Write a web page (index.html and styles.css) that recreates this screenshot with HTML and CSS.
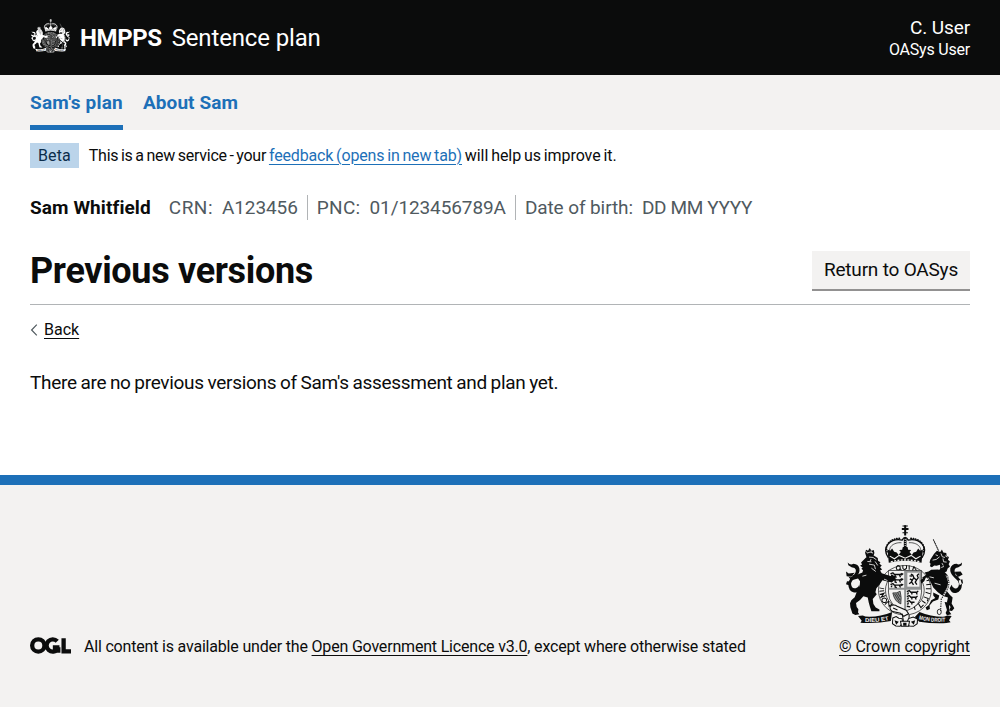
FILE: index.html
```html
<!DOCTYPE html>
<html lang="en">
<head>
<meta charset="utf-8">
<title>Previous versions - Sentence plan</title>
<link rel="stylesheet" href="styles.css">
</head>
<body>
<svg class="sprite" aria-hidden="true">
  <symbol id="crest" viewBox="50 28 350 308">
    <!-- crown -->
    <g fill="none" stroke="currentColor">
      <path d="M227 29v30M217 40h20" stroke-width="6"/>
      <path d="M219 31h16M219 51h16" stroke-width="3"/>
      <path d="M177 126C153 92 186 67 218 73Q227 57 236 73C268 67 300 92 277 126" stroke-width="4"/>
      <path d="M185 119C170 94 194 79 216 81M269 119C284 94 260 79 238 81" stroke-width="2"/>
      <path d="M227 67v36" stroke-width="8"/>
      <path d="M173 108C164 84 188 67 213 68M281 108C290 84 266 67 241 68" stroke-width="5" stroke-linecap="round" stroke-dasharray="1 6"/>
      <path d="M227 70v34" stroke="var(--ground)" stroke-width="3" stroke-dasharray="3 3"/>
    </g>
    <path fill="currentColor" d="M174 101l8 4 6-7 6 10 8 2 5 8 7-9-5-6 9-1 2-8h14l2 8 9 1-5 6 7 9 5-8 8-2 6-10 6 7 8-4-4 40q-49-12-98 0z"/>
    <path d="M181 121l14 8 14-10 18 8 18-8 14 10 14-8" fill="none" stroke="var(--ground)" stroke-width="3"/>
    <path d="M184 138q43-11 86 0" fill="none" stroke="var(--ground)" stroke-width="4" stroke-dasharray="6 4"/>
    <!-- garter -->
    <ellipse cx="226" cy="223" rx="79" ry="74" fill="var(--ground)" stroke="currentColor" stroke-width="2"/>
    <ellipse cx="226" cy="223" rx="58" ry="57" fill="var(--ground)" stroke="currentColor" stroke-width="2"/>
    <g fill="none" stroke="currentColor" stroke-width="3">
      <path d="M205 149q-8 7-2 13q8 2 9-5t-7-8m7 9 4 6M220 148v9q5 8 11 0v-9M239 149v13M253 152l-4 12M253 152l9 14"/>
      <path d="M150 216l14 3M150 226l14-1M151 236l13-4-9 12 14-5M157 253q2-8 10-6t2 12q-9 4-12-6M166 266l11-10 2 15 11-8"/>
      <path d="M288 184l12-6M291 195l13-3 1 9M290 207l15-2M289 219h15M288 229l15 5M283 243l13 5-3 8M277 254l11 8M266 262l8 13 8-8M253 268l4 14"/>
    </g>
    <!-- quartered shield -->
    <path d="M177 164h99v65q0 43-49 57q-50-14-50-57z" fill="var(--ground)" stroke="currentColor" stroke-width="2"/>
    <path d="M178 219h97M227 165v119" stroke="var(--mid)" stroke-width="6"/>
    <rect x="231" y="168" width="41" height="47" fill="none" stroke="var(--mid)" stroke-width="5"/>
    <g fill="none" stroke="currentColor" stroke-width="4" stroke-linejoin="round">
      <path d="M183 174l7-3 5 5h18l4-4M188 177l-3 6M197 177v6l5 1M210 177l3 7M215 178l6-5"/>
      <path d="M183 190l7-3 5 5h18l4-4M188 193l-3 6M197 193v6l5 1M210 193l3 7M215 194l6-5"/>
      <path d="M183 206l7-3 5 5h18l4-4M188 209l-3 5M197 209v5l5 1M210 209l3 6M215 210l6-5"/>
      <path d="M232 227l7-3 5 5h18l4-4M237 230l-3 6M247 230v6M260 230l3 6"/>
      <path d="M232 242l7-3 5 5h16l4-4M237 245l-3 6M247 245v6M257 245l3 6"/>
      <path d="M232 257l7-3 5 5h11M237 260l-3 6M247 260v6M232 271l10 2"/>
      <path d="M244 175l6 3 3 8-5 7-7-4M253 186l8 7-4 6 5 7M249 192l-4 7-6 5M246 198l6 9M261 192l5-6-3-7 5-5M240 180l8 1"/>
    </g>
    <path d="M190 231q12 2 22-5 5 19 2 38-19-7-24-33z" fill="var(--mid)"/>
    <path d="M190 231q12 2 22-5 5 19 2 38-19-7-24-33M195 234l15 25M200 233l12 20M205 231l7 12" fill="none" stroke="currentColor" stroke-width="2"/>
    <!-- lion -->
    <g fill="currentColor">
      <path d="M107 111l3-9 6 3 5-8 5 8 7-2 2 9-4 12h-20z"/>
      <path d="M110 125l10-7 13 1 12 8 1 8 7 4-3 5 7 5-5 5 6 7-6 3 5 8 14 5 15 4 1-6 6 5 7 2-3 5 5 3-8 4-7 5-11-1-17-5-9 14-9 10-3 12 4 6-12 14 2 15 7 11 11 6v5h-24l-4-12-4-14-3-15-13-4-10 11-12 9 2 12 5 7-1 10 4 5-12 2-9-4-2-7-4-12-1-12 4-9 10-9 5-13 10-18 1-17-6-8-14 4-9-2-6-8 6 2 8-3-4-5 7 2 9-1 16-7 2-7-5-4 4-4-8-5 6-4-3-6z"/>
      <path d="M55 140q8 10 17 4 15 1 18 14 3 14-12 27-12 10-13 19 2 16 14 13 10-3 10-11l4 11q-5 15-19 13-17-4-17-25 0-12 12-23 13-12 10-21-3-7-11-6l-11-7z"/>
      <path d="M76 171l-18 2-8-6 2 14 14 2zM65 197l-12-1-3 9 13 5z"/>
    </g>
    <path d="M113 112q9-6 18 0M119 124l12 1 10 7M114 137l12 1M119 145l16 3 3 12M125 130l-3 6M137 137l8 12M126 157l13 10M99 181l12-3M164 190l10 4M110 107l3 4M123 105l5 5" fill="none" stroke="var(--ground)" stroke-width="2.5"/>
    <!-- unicorn -->
    <path d="M311 71l16 34" stroke="currentColor" stroke-width="3" stroke-dasharray="5 1"/>
    <g fill="currentColor">
      <path d="M302 132l11-17 9-10 10 4 5-8 4 9 9 2 1 9 7 3-3 8 6 5-4 8 4 7-7 6-3 9-9 4-12 1-4-5 6-9-1-11-10 3-7-1-7 5-6-3 2-7-3-4z"/>
      <path d="M278 185l12-8-5-7 12-3 8-5 20-1 18 5 12 13 4 17-1 17-6 13 9 11 8 8-3 18 8 14-7 8-9-1 5-11-11-14 3-14-15-5-16-12-13-13-6-13-8-16-8-1-5 11-9 7-2-10 7-6z"/>
      <path d="M311 230l18 9-3 12-16 6-10 12 1 10-9 4-4-8 10-8 7-14 12-7-6-7zM345 258l13 2 1 26 6 9-13 3-4-7 4-9z"/>
      <path d="M397 140q-8 9-16 4-15 0-19 14-2 14 12 27 12 9 14 19-1 15-12 14-9-3-10-11l-6 10q5 17 19 14 17-4 18-26-1-12-12-22-12-12-10-21 3-8 10-7l11-7zM376 168l17-1 6 9-12 7-9-5zM387 194l11-4 2 12-10 6z"/>
    </g>
    <g fill="none" stroke="var(--ground)" stroke-width="2.5">
      <path d="M318 117l7 3M309 133l11-2 10-8M334 113l4 10 8 2M340 128l2 10 9 1M337 142l4 7M347 120l6 4M335 155l8-3M300 183l13 3M315 202l18 5"/>
      <path d="M350 178q13 20 4 39T335 249" stroke-width="5"/>
    </g>
    <path d="M350 178q13 20 4 39T335 249l-2 36" fill="none" stroke="currentColor" stroke-width="3" stroke-dasharray="4 3"/>
    <ellipse cx="329" cy="288" rx="6" ry="8" fill="none" stroke="currentColor" stroke-width="2.5"/>
    <!-- buckle and compartment -->
    <path d="M182 272q10-9 21-1l27 12 7 10-14 8-10-9-23-5q-10-6-8-15z" fill="var(--ground)" stroke="currentColor" stroke-width="3"/>
    <path d="M191 276l13 6M218 293l4 24 8 8 8-8 1-20" fill="none" stroke="currentColor" stroke-width="3"/>
    <g fill="var(--ground)" stroke="currentColor" stroke-width="3">
      <path d="M190 306l10-4 8 5 10 1 1 12-7 11-13-1-10-7zM237 308l14-5 13 6-1 14-11 8-13-1-6-12z"/>
      <path d="M213 316h27l-3 15h-21z"/>
    </g>
    <path d="M195 313l13 4-8 9zM257 313l-13 4 9 9zM221 320h10v9h-10z" fill="currentColor"/>
    <!-- motto ribbon -->
    <path d="M86 300l14-1 8 3q40 3 80-14l-4 27q-38 8-82 6l-9-1 4-6zM366 300l-13-1-8 3q-40 1-75-14l-14 15 13 14q40 6 82 4l12-2-5-6z" fill="currentColor"/>
    <path id="motto-left" d="M107 318q40 2 76-7" fill="none"/>
    <path id="motto-right" d="M268 310q38 10 84 7" fill="none"/>
    <g class="motto"><text><textPath href="#motto-left" textLength="72" lengthAdjust="spacingAndGlyphs">DIEU ET</textPath></text>
    <text><textPath href="#motto-right" textLength="80" lengthAdjust="spacingAndGlyphs">MON DROIT</textPath></text></g>
  </symbol>
</svg>

<header class="header">
  <a class="brand">
    <svg class="brand-crest"><use href="#crest"/></svg>
    <span class="brand-org">HMPPS</span>
    <span class="brand-product">Sentence plan</span>
  </a>
  <div class="user">
    <span class="user-name">C. User</span>
    <span class="user-role">OASys User</span>
  </div>
</header>

<nav class="nav">
  <a class="nav-link nav-link-plan nav-link-current">Sam's plan</a>
  <a class="nav-link">About Sam</a>
</nav>

<div class="phase">
  <strong class="tag">Beta</strong>
  <span class="phase-text"><span class="phase-lead">This is a new service - your</span> <a class="link">feedback (opens in new tab)</a> <span class="phase-tail">will help us improve it.</span></span>
</div>

<main class="main">
  <div class="person">
    <strong class="person-name">Sam Whitfield</strong>
    <div class="person-item"><span class="crn-label">CRN:</span><span>A123456</span></div>
    <div class="person-item"><span class="pnc-label">PNC:</span><span class="pnc">01/123456789A</span></div>
    <div class="person-item"><span>Date of birth:</span><span class="dob">DD MM YYYY</span></div>
  </div>
  <div class="heading-row">
    <h1 class="heading">Previous versions</h1>
    <button class="button">Return to OASys</button>
  </div>
  <a class="back"><svg class="back-icon" viewBox="0 0 8 12"><path d="M6.8.7 1.6 6l5.2 5.3"/></svg><span class="back-text">Back</span></a>
  <p class="body-text">There are no previous versions of Sam's assessment and plan yet.</p>
</main>

<footer class="footer">
  <div class="licence">
    <svg class="ogl" viewBox="0 0 483 196"><circle cx="97.8" cy="97.8" r="72.4"/><path d="M321 48A72.4 72.4 0 1 0 326 141M269 119h78M333 119v65M396 12v156h87"/></svg>
    <span class="licence-text">All content is available under the <a class="link-dark">Open Government Licence v3.0</a>, except where otherwise stated</span>
  </div>
  <a class="copyright">
    <svg class="footer-crest"><use href="#crest"/></svg>
    <span class="link-dark copyright-text">© Crown copyright</span>
  </a>
</footer>
</body>
</html>
```
FILE: styles.css
```css
* { box-sizing: border-box; }

body {
  margin: 0;
  min-height: 707px;
  display: flex;
  flex-direction: column;
  background: #fff;
  color: #0b0c0c;
  font-family: Roboto, Arial, sans-serif;
  font-size: 16px;
  line-height: 20px;
}

.sprite { position: absolute; width: 0; height: 0; }
.motto { font: bold 17px "Liberation Sans", sans-serif; fill: var(--ground); }

.header {
  --ground: #0b0c0c;
  --mid: #777;
  height: 75px;
  padding: 0 30px;
  display: flex;
  justify-content: space-between;
  background: #0b0c0c;
  color: #fff;
}
.brand { display: flex; align-items: center; font-size: 24px; line-height: 30px; white-space: nowrap; }
.brand-crest { width: 39px; height: 34px; margin: 0 10px 3px 1px; }
.brand-org { font-weight: 700; letter-spacing: -.4px; margin-right: 10px; }
.brand-product { letter-spacing: -.15px; }
.user { display: flex; flex-direction: column; align-items: flex-end; padding-top: 17px; }
.user-name { font-size: 19px; line-height: 22px; letter-spacing: -.1px; }
.user-role { line-height: 21px; letter-spacing: -.2px; }

.nav { display: flex; gap: 20px; height: 55px; padding: 0 30px; background: #f3f2f1; }
.nav-link { padding-top: 16px; font-size: 19px; font-weight: 700; line-height: 24px; color: #1d70b8; letter-spacing: .08px; }
.nav-link-plan { letter-spacing: .22px; }
.nav-link-current { border-bottom: 5px solid #1d70b8; }

.phase { display: flex; align-items: center; gap: 10px; height: 51px; padding: 0 30px; }
.tag { height: 25px; padding: 0 8px; background: #bbd4ea; color: #0c2d4a; font-weight: 400; line-height: 25px; letter-spacing: .1px; }
.phase-text { word-spacing: -1px; letter-spacing: -.15px; line-height: 24px; white-space: nowrap; }
.phase-lead { letter-spacing: -.26px; }
.phase-tail { letter-spacing: -.07px; }
.link { color: #1d70b8; text-decoration: underline 1px; text-underline-offset: 3px; }
.link-dark { text-decoration: underline 1px; text-underline-offset: 3px; }

.main { padding: 14px 30px 0; flex: 1; }
.person { display: flex; height: 25px; font-size: 19px; line-height: 25px; color: #505a5f; letter-spacing: -.1px; }
.person-name { margin-right: 9px; color: #0b0c0c; letter-spacing: .09px; }
.person-item { display: flex; gap: 9px; padding: 0 9px; }
.person-item + .person-item { border-left: 1px solid #b1b4b6; }
.crn-label { letter-spacing: .5px; }
.pnc-label { letter-spacing: .3px; }
.dob { letter-spacing: -.37px; }

.heading-row { display: flex; justify-content: space-between; align-items: flex-start; height: 74px; margin-top: 11px; padding-top: 20px; border-bottom: 1px solid #b1b4b6; }
.heading { margin: 0; font-size: 36px; line-height: 40px; letter-spacing: -.33px; }
.button { height: 40px; padding: 0 12px; border: 0; border-bottom: 2px solid #929191; background: #f3f2f1; color: #0b0c0c; font: 19px/38px Roboto, Arial, sans-serif; letter-spacing: -.2px; }

.back { display: flex; align-items: center; gap: 6px; height: 20px; margin-top: 15px; }
.back-icon { width: 8px; height: 12px; fill: none; stroke: #505a5f; stroke-width: 1.2; }
.back-text { text-decoration: underline 1px; text-underline-offset: 3px; }
.body-text { margin: 30px 0 0; font-size: 19px; line-height: 25px; letter-spacing: -.3px; word-spacing: -.7px; }

.footer {
  --ground: #f3f2f1;
  --mid: #909292;
  display: flex;
  justify-content: space-between;
  align-items: flex-end;
  height: 232px;
  padding: 0 30px 50px;
  border-top: 10px solid #1d70b8;
  background: #f3f2f1;
}
.licence { display: flex; align-items: center; gap: 13px; white-space: nowrap; }
.ogl { width: 41px; height: 17px; margin-bottom: 3px; fill: none; stroke: currentColor; stroke-width: 50.7; }
.licence-text { letter-spacing: -.19px; }
.copyright { display: flex; flex-direction: column; align-items: center; }
.footer-crest { width: 117px; height: 103px; margin-bottom: 9px; }
.copyright-text { letter-spacing: -.09px; }
```
